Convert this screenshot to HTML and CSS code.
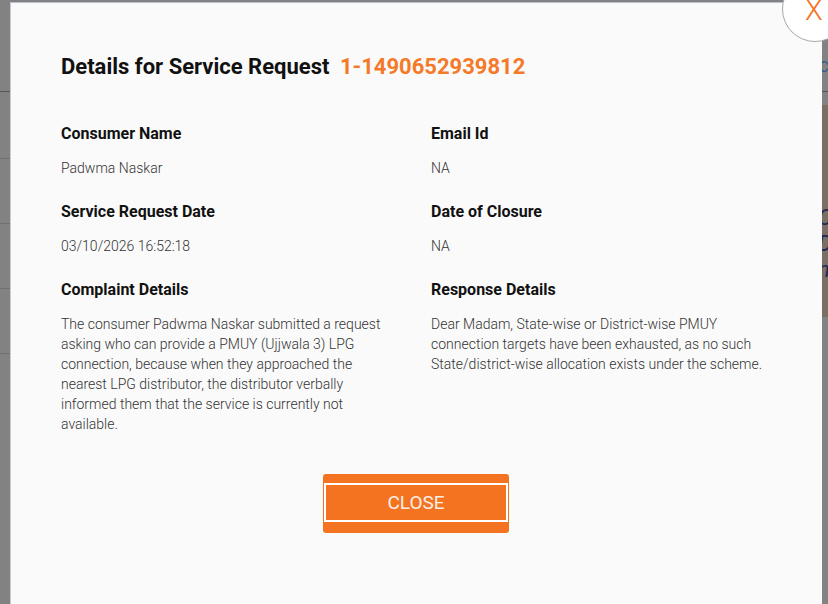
FILE: index.html
```html
<!DOCTYPE html>
<html>
<head>
<meta charset="utf-8">
<link rel="stylesheet" href="styles.css">
</head>
<body>
<div class="page">
  <div class="page-header"><span class="nav-text">ACCOUNT</span></div>
  <div class="page-body">
    <div class="page-list">
      <div class="page-row first"></div>
      <div class="page-row"></div>
      <div class="page-row"></div>
      <div class="page-row"></div>
    </div>
    <div class="page-banner">
      <span class="banner-line l1">Co</span>
      <span class="banner-line l2">Di</span>
      <span class="banner-line l3">ne</span>
    </div>
  </div>
</div>

<div class="modal">
  <h1 class="modal-title">Details for Service Request <span class="req-id">1-1490652939812</span></h1>
  <div class="fields">
    <div class="field">
      <div class="label">Consumer Name</div>
      <div class="value">Padwma Naskar</div>
    </div>
    <div class="field">
      <div class="label">Email Id</div>
      <div class="value">NA</div>
    </div>
    <div class="field">
      <div class="label">Service Request Date</div>
      <div class="value">03/10/2026 16:52:18</div>
    </div>
    <div class="field">
      <div class="label">Date of Closure</div>
      <div class="value">NA</div>
    </div>
    <div class="field">
      <div class="label">Complaint Details</div>
      <div class="value">The consumer Padwma Naskar submitted a request asking who can provide a PMUY (Ujjwala 3) LPG connection, because when they approached the nearest LPG distributor, the distributor verbally informed them that the service is currently not available.</div>
    </div>
    <div class="field">
      <div class="label">Response Details</div>
      <div class="value">Dear Madam, State-wise or District-wise PMUY connection targets have been exhausted, as no such State/district-wise allocation exists under the scheme.</div>
    </div>
  </div>
  <div class="actions">
    <button class="close-btn"><span class="close-inner">CLOSE</span></button>
  </div>
</div>

<div class="close-circle"><span class="close-x">X</span></div>
</body>
</html>
```

FILE: styles.css
```css
html, body {
  margin: 0;
  padding: 0;
}
body {
  width: 828px;
  height: 604px;
  overflow: hidden;
  background: #828282;
  font-family: Roboto, "Liberation Sans", sans-serif;
  position: relative;
}

/* background page (dimmed) */
.page {
  width: 828px;
}
.page-header {
  height: 91px;
  border-bottom: 1px solid #555;
  display: flex;
  justify-content: flex-end;
  align-items: flex-start;
}
.nav-text {
  margin-top: 59px;
  margin-right: -40px;
  font-size: 14px;
  color: #2d5a8a;
  letter-spacing: 0.5px;
}
.page-body {
  display: flex;
}
.page-list {
  flex: 1;
}
.page-row {
  height: 64px;
  border-bottom: 1px solid #6f6f6f;
}
.page-row.first {
  height: 66px;
}
.page-banner {
  width: 300px;
  height: 212px;
  margin-top: 13px;
  margin-right: -290px;
  background: #7b6e64;
  display: flex;
  flex-direction: column;
  padding-top: 100px;
  box-sizing: border-box;
}
.banner-line {
  font-style: italic;
  font-size: 22px;
  color: #1e2a55;
  line-height: 26px;
  padding-left: 0;
}

/* modal */
.modal {
  position: absolute;
  left: 10px;
  top: 2px;
  width: 812px;
  height: 640px;
  box-sizing: border-box;
  background: #fafafa;
  border-left: 1px solid #c3ccd8;
  border-top: 1px solid #b9c2cc;
  padding: 50px 51px 0 50px;
}
.modal-title {
  margin: 0;
  font-size: 22px;
  line-height: 28px;
  font-weight: 700;
  color: #111;
}
.req-id {
  color: #f47a2a;
  margin-left: 5px;
}
.fields {
  margin-top: 43px;
  display: grid;
  grid-template-columns: 340px 340px;
  column-gap: 30px;
}
.field {
  margin-bottom: 24px;
}
.label {
  font-size: 16px;
  line-height: 20px;
  font-weight: 700;
  color: #111;
}
.value {
  margin-top: 14px;
  font-size: 14px;
  line-height: 20px;
  font-weight: 300;
  color: #333;
}
.actions {
  display: flex;
  justify-content: center;
  margin-top: 16px;
}
.close-btn {
  width: 186px;
  height: 59px;
  background: #f47321;
  border: none;
  border-radius: 3px;
  padding: 9px 1px 11px;
  box-sizing: border-box;
  display: flex;
  cursor: pointer;
}
.close-inner {
  flex: 1;
  border: 2px solid #fff;
  display: flex;
  align-items: center;
  justify-content: center;
  font-family: Roboto, "Liberation Sans", sans-serif;
  font-size: 19px;
  font-weight: 400;
  color: #fbeee6;
}

/* close circle top-right */
.close-circle {
  position: absolute;
  left: 782px;
  top: -24px;
  width: 66px;
  height: 66px;
  border-radius: 50%;
  background: #fff;
  border: 1px solid #a8a8a8;
  box-sizing: border-box;
}
.close-x {
  position: absolute;
  left: 22px;
  top: 18px;
  font-size: 29px;
  line-height: 30px;
  font-weight: 300;
  color: #f47321;
}
```
